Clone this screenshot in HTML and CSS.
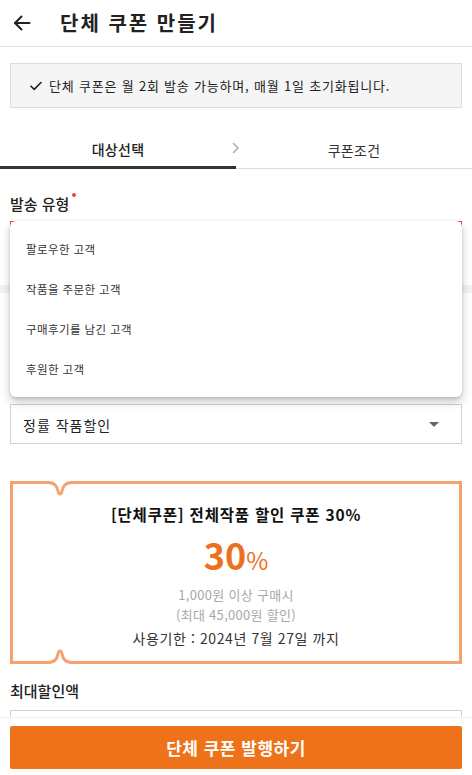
FILE: index.html
```html
<!DOCTYPE html>
<html lang="ko">
<head>
<meta charset="utf-8">
<title>단체 쿠폰 만들기</title>
<link rel="stylesheet" href="styles.css">
</head>
<body>
<header class="topbar">
  <button class="back" aria-label="뒤로">
    <svg width="18" height="18" viewBox="0 0 18 18" fill="none" stroke="#222" stroke-width="2" stroke-linecap="round" stroke-linejoin="round"><path d="M16.5 9H2"/><path d="M8.5 2.5 2 9l6.5 6.5"/></svg>
  </button>
  <h1 class="title">단체 쿠폰 만들기</h1>
</header>

<div class="notice-wrap">
  <div class="notice">
    <svg class="check" width="12" height="10" viewBox="0 0 12 10" fill="none" stroke="#222" stroke-width="1.6" stroke-linecap="round" stroke-linejoin="round"><path d="M1 5.2 4.2 8.4 11 1.5"/></svg>
    <span>단체 쿠폰은 월 2회 발송 가능하며, 매월 1일 초기화됩니다.</span>
  </div>
</div>

<nav class="tabs">
  <div class="tab active">대상선택</div>
  <div class="tab">쿠폰조건</div>
  <svg class="chev" width="8" height="12" viewBox="0 0 8 12" fill="none" stroke="#b0b0b0" stroke-width="1.6" stroke-linecap="round" stroke-linejoin="round"><path d="M1.5 1.5 6 6l-4.5 4.5"/></svg>
</nav>

<section class="section first">
  <div class="label required">발송 유형</div>
  <div class="select-wrap">
    <div class="select error"></div>
    <ul class="menu">
      <li>팔로우한 고객</li>
      <li>작품을 주문한 고객</li>
      <li>구매후기를 남긴 고객</li>
      <li>후원한 고객</li>
    </ul>
  </div>
</section>

<div class="divider"></div>

<section class="section second">
  <div class="select"><span>정률 작품할인</span><span class="caret"></span></div>

  <div class="coupon">
    <svg class="notch notch-top" width="24" height="18" viewBox="0 0 24 18" fill="none"><rect x="2" y="0" width="20" height="3" fill="#fff"/><path d="M0 1.5C6 1.5 9 4 10 10C10.7 14 13.3 14 14 10C15 4 18 1.5 24 1.5" stroke="#f3a36e" stroke-width="3"/></svg>
    <svg class="notch notch-bottom" width="24" height="18" viewBox="0 0 24 18" fill="none"><rect x="2" y="0" width="20" height="3" fill="#fff"/><path d="M0 1.5C6 1.5 9 4 10 10C10.7 14 13.3 14 14 10C15 4 18 1.5 24 1.5" stroke="#f3a36e" stroke-width="3"/></svg>
    <div class="coupon-title">[단체쿠폰] 전체작품 할인 쿠폰 30%</div>
    <div class="coupon-rate"><span class="num">30</span><span class="pct">%</span></div>
    <div class="coupon-sub">1,000원 이상 구매시</div>
    <div class="coupon-sub">(최대 45,000원 할인)</div>
    <div class="coupon-date">사용기한 : 2024년 7월 27일 까지</div>
  </div>

  <div class="label max">최대할인액</div>
  <div class="input"></div>
</section>

<footer class="bottom">
  <button class="cta">단체 쿠폰 발행하기</button>
</footer>
</body>
</html>
```

FILE: styles.css
```css
* { box-sizing: border-box; }
html, body { margin: 0; padding: 0; }
body {
  font-family: "Noto Sans CJK KR", "Noto Sans", sans-serif;
  color: #222;
  background: #fff;
  width: 472px;
  height: 775px;
  overflow: hidden;
}

.topbar {
  height: 47px;
  border-bottom: 1px solid #e2e2e2;
  display: flex;
  align-items: center;
}
.back {
  border: 0;
  background: none;
  padding: 0;
  margin: 0 0 0 13px;
  width: 18px;
  height: 18px;
  display: flex;
}
.title {
  margin: 0 0 0 29px;
  font-size: 20px;
  font-weight: 700;
  letter-spacing: 2px;
  line-height: 24px;
  color: #222;
}

.notice-wrap { padding: 16px 10px 0; }
.notice {
  height: 45px;
  background: #f5f5f5;
  border: 1px solid #dcdcdc;
  display: flex;
  align-items: center;
  padding-left: 19px;
  gap: 7px;
  font-size: 13px;
  letter-spacing: 0.8px;
  color: #222;
}
.check { flex: none; }

.tabs {
  position: relative;
  margin-top: 21px;
  display: grid;
  grid-template-columns: 236px 1fr;
  height: 40px;
}
.tab {
  display: flex;
  align-items: center;
  justify-content: center;
  font-size: 14px;
  color: #333;
  border-bottom: 1px solid #dcdcdc;
  padding-top: 2px;
  letter-spacing: 0.3px;
}
.tab.active {
  border-bottom: 3px solid #333;
  font-weight: 500;
  color: #222;
}
.chev {
  position: absolute;
  left: 232px;
  top: 13px;
}

.section { padding: 0 10px; }
.section.first { padding-top: 25px; }
.label {
  font-size: 15px;
  line-height: 20px;
  font-weight: 500;
  color: #222;
  margin-bottom: 7px;
}
.label.required { display: flex; }
.label.required::after {
  content: "";
  width: 4px;
  height: 4px;
  border-radius: 50%;
  background: #e8453c;
  margin: -1px 0 0 3px;
}

.select-wrap { position: relative; }
.select {
  height: 40px;
  border: 1px solid #d3d3d3;
  display: flex;
  align-items: center;
  justify-content: space-between;
  padding: 1px 22px 0 12px;
  font-size: 14px;
  letter-spacing: 1px;
  color: #222;
  background: #fff;
}
.select.error { border-color: #e2483d; }
.caret {
  width: 0;
  height: 0;
  border-left: 5px solid transparent;
  border-right: 5px solid transparent;
  border-top: 5px solid #666;
}

.menu {
  position: absolute;
  left: 0;
  right: 0;
  top: 0;
  margin: 0;
  padding: 8px 0;
  list-style: none;
  background: #fff;
  border-radius: 6px;
  box-shadow: 0 5px 10px rgba(0,0,0,0.22), 0 1px 3px rgba(0,0,0,0.12);
  z-index: 5;
}
.menu li {
  height: 40px;
  display: flex;
  align-items: center;
  padding-left: 16px;
  font-size: 11.5px;
  color: #333;
  letter-spacing: 0.4px;
}

.divider {
  height: 8px;
  background: #f2f2f2;
  margin-top: 24px;
}
.section.second { padding-top: 111px; }

.coupon {
  position: relative;
  margin-top: 37px;
  border: 3px solid #f3a36e;
  padding: 19px 0 12px;
  text-align: center;
}
.notch {
  position: absolute;
  left: 35px;
  z-index: 1;
}
.notch-top { top: -3px; }
.notch-bottom { top: auto; bottom: -3px; transform: scaleY(-1); }
.coupon-title {
  font-size: 15.5px;
  font-weight: 700;
  line-height: 22px;
  letter-spacing: 0.8px;
  color: #111;
}
.coupon-rate {
  margin-top: 10px;
  line-height: 38px;
  color: #ec701e;
}
.coupon-rate .num { font-size: 36px; font-weight: 700; }
.coupon-rate .pct { font-size: 24px; font-weight: 400; }
.coupon-sub {
  font-size: 13px;
  line-height: 20px;
  letter-spacing: 0.3px;
  color: #a8a8a8;
}
.coupon-rate + .coupon-sub { margin-top: 3px; }
.coupon-date {
  margin-top: 2px;
  font-size: 14px;
  line-height: 22px;
  letter-spacing: 0.6px;
  color: #333;
}

.label.max { margin-top: 17px; margin-bottom: 9px; }
.input {
  height: 40px;
  border: 1px solid #d3d3d3;
}

.bottom {
  position: fixed;
  left: 0;
  right: 0;
  bottom: 0;
  background: #fff;
  border-top: 1px solid #f0f0f0;
  padding: 8px 10px 6px;
}
.cta {
  width: 100%;
  height: 43px;
  border: 0;
  border-radius: 2px;
  background: #ee7219;
  color: #fff;
  font-family: inherit;
  font-size: 17px;
  font-weight: 700;
  letter-spacing: 0.5px;
}
```
